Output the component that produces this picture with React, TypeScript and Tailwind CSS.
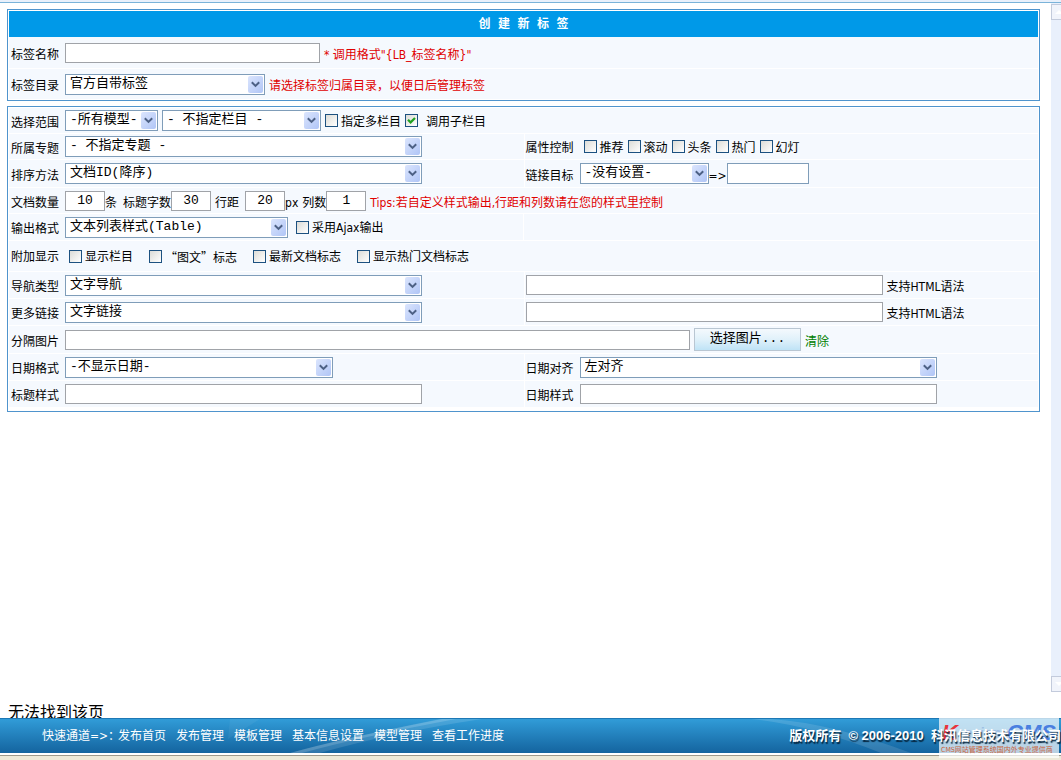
import React from 'react';
import clsx from 'clsx';

interface SelectProps {
  id: string;
  options: string[];
  className: string;
  label?: string;
}

interface TextInputProps {
  id: string;
  className: string;
  value?: string;
  label?: string;
}

interface CheckProps {
  id: string;
  text: string;
  checked?: boolean;
  className?: string;
}

interface CellProps {
  className?: string;
  children?: React.ReactNode;
}

const CONTROL_FONT = "font-['Liberation_Mono','Noto_Sans_CJK_SC',monospace] text-[13px]";

const Select: React.FC<SelectProps> = ({ id, options, className, label }) => (
  <div className={clsx('relative h-[21px] shrink-0', className)}>
    <select
      id={id}
      aria-label={label}
      className={clsx(
        'block h-full w-full appearance-none border border-[#7f9db9] bg-white pb-px pl-1 pr-5 leading-4 text-black',
        CONTROL_FONT
      )}
    >
      {options.map((option) => (
        <option key={option}>{option}</option>
      ))}
    </select>
    <span className="pointer-events-none absolute right-[2px] top-[2px] flex h-[17px] w-[15px] items-center justify-center rounded-xs bg-gradient-to-br from-[#dbe5fd] to-[#b0c5f6]">
      <svg width="9" height="7" viewBox="0 0 9 7" fill="none" stroke="#4d6185" strokeWidth="2">
        <path d="M0.8 1.2 L4.5 4.9 L8.2 1.2" />
      </svg>
    </span>
  </div>
);

const TextInput: React.FC<TextInputProps> = ({ id, className, value = '', label }) => (
  <input
    id={id}
    type="text"
    aria-label={label}
    defaultValue={value}
    className={clsx('h-5 shrink-0 border border-[#a0a3a8] bg-white pb-px text-black', CONTROL_FONT, className)}
  />
);

const Check: React.FC<CheckProps> = ({ id, text, checked = false, className = 'gap-[3px]' }) => (
  <div className={clsx('flex shrink-0 items-center', className)}>
    <span className="relative h-[13px] w-[13px]">
      <input
        id={id}
        type="checkbox"
        defaultChecked={checked}
        className="peer block h-[13px] w-[13px] appearance-none border border-[#1c5180] bg-gradient-to-br from-[#dcdcd7] to-white"
      />
      <svg
        className="pointer-events-none absolute left-[2px] top-[2px] hidden peer-checked:block"
        width="9"
        height="9"
        viewBox="0 0 9 9"
        fill="none"
        stroke="#21a121"
        strokeWidth="2.2"
      >
        <path d="M1 3.8 L3.6 6.4 L8 2" />
      </svg>
    </span>
    <label htmlFor={id} className="pt-[2px]">
      {text}
    </label>
  </div>
);

const FieldLabel: React.FC<{ htmlFor: string; children: React.ReactNode }> = ({ htmlFor, children }) => (
  <label htmlFor={htmlFor} className="mr-[6px] shrink-0 pt-1">
    {children}
  </label>
);

const Row: React.FC<{ height: string; children: React.ReactNode }> = ({ height, children }) => (
  <div className={clsx('flex gap-px', height)}>{children}</div>
);

const Cell: React.FC<CellProps> = ({ className = 'pl-[2px]', children }) => (
  <div className={clsx('flex min-w-0 flex-1 basis-0 items-center bg-[#f5f9fe]', className)}>{children}</div>
);

const Panel: React.FC<CellProps> = ({ className, children }) => (
  <section className={clsx('flex flex-col gap-px border border-[#4f94cd] bg-white px-px pt-px', className)}>
    {children}
  </section>
);

const flags = ['推荐', '滚动', '头条', '热门', '幻灯'];
const links = ['发布首页', '发布管理', '模板管理', '基本信息设置', '模型管理', '查看工作进度'];

const ScrollBar = () => (
  <div className="flex w-[10px] shrink-0 flex-col justify-between overflow-hidden bg-[#e9f0fc]">
    <div className="mt-px flex h-4 w-4 items-center justify-center border border-[#c3cbdc] bg-[#f1f4fb]">
      <svg width="8" height="4" viewBox="0 0 8 4" fill="#ffffff">
        <path d="M4 0 L8 4 H0 Z" />
      </svg>
    </div>
    <div className="flex h-4 w-4 items-center justify-center border border-[#c3cbdc] bg-[#f1f4fb]">
      <svg width="8" height="4" viewBox="0 0 8 4" fill="#ffffff">
        <path d="M0 0 H8 L4 4 Z" />
      </svg>
    </div>
  </div>
);

const LabelForm = () => (
  <form className="flex min-w-0 flex-1 flex-col gap-[5px] pl-[7px] pr-[11px] pt-[6px]">
    <Panel className="pb-px">
      <div>
        <h1 className="h-[26px] whitespace-pre bg-[#0099e8] text-center text-xs font-bold leading-[26px] text-white">
          创  建  新  标  签
        </h1>
        <Row height="h-[31px]">
          <Cell>
            <FieldLabel htmlFor="name">标签名称</FieldLabel>
            <TextInput id="name" className="w-[255px]" />
            <span className="ml-1 pt-1 text-[#e00000]">* 调用格式"{'{LB_标签名称}'}"</span>
          </Cell>
        </Row>
      </div>
      <Row height="h-[30px]">
        <Cell>
          <FieldLabel htmlFor="folder">标签目录</FieldLabel>
          <Select id="folder" className="w-[200px]" options={['官方自带标签']} />
          <span className="ml-1 pt-1 text-[#e00000]">请选择标签归属目录，以便日后管理标签</span>
        </Cell>
      </Row>
    </Panel>

    <Panel className="pb-1">
      <Row height="h-[25px]">
        <Cell>
          <FieldLabel htmlFor="model">选择范围</FieldLabel>
          <Select id="model" className="mr-1 w-[93px]" options={['-所有模型-']} />
          <Select id="column" label="栏目" className="mr-1 w-[159px]" options={['- 不指定栏目 -']} />
          <div className="flex gap-1">
            <Check id="multi" text="指定多栏目" />
            <Check id="children" text="调用子栏目" checked className="gap-2" />
          </div>
        </Cell>
      </Row>
      <Row height="h-[25px]">
        <Cell>
          <FieldLabel htmlFor="topic">所属专题</FieldLabel>
          <Select id="topic" className="w-[357px]" options={['- 不指定专题 -']} />
        </Cell>
        <Cell className="pl-px">
          <span className="mr-[10px] shrink-0 pt-[2px]">属性控制</span>
          <div className="flex gap-1">
            {flags.map((flag) => (
              <Check key={flag} id={flag} text={flag} />
            ))}
          </div>
        </Cell>
      </Row>
      <Row height="h-[27px]">
        <Cell>
          <FieldLabel htmlFor="order">排序方法</FieldLabel>
          <Select id="order" className="w-[357px]" options={['文档ID(降序)']} />
        </Cell>
        <Cell className="pl-px">
          <FieldLabel htmlFor="target">链接目标</FieldLabel>
          <Select id="target" className="w-[129px]" options={['-没有设置-']} />
          <span className="w-[18px] shrink-0 pt-1 text-center">=&gt;</span>
          <input
            type="text"
            aria-label="自定义链接目标"
            className="h-[21px] w-[82px] shrink-0 border border-[#7f9db9] bg-white"
          />
        </Cell>
      </Row>
      <Row height="h-[25px]">
        <Cell>
          <FieldLabel htmlFor="count">文档数量</FieldLabel>
          <TextInput id="count" value="10" className="w-10 text-center" />
          <span className="mr-[6px] pt-1">条</span>
          <label htmlFor="length" className="pt-1">标题字数</label>
          <TextInput id="length" value="30" className="mr-1 w-10 text-center" />
          <FieldLabel htmlFor="spacing">行距</FieldLabel>
          <TextInput id="spacing" value="20" className="w-10 text-center" />
          <span className="mr-1 pt-1">px</span>
          <label htmlFor="cols" className="pt-1">列数</label>
          <TextInput id="cols" value="1" className="mr-1 w-10 text-center" />
          <span className="pt-1 text-[#e00000]">Tips:若自定义样式输出,行距和列数请在您的样式里控制</span>
        </Cell>
      </Row>
      <Row height="h-[26px]">
        <Cell>
          <FieldLabel htmlFor="format">输出格式</FieldLabel>
          <Select id="format" className="mr-2 w-[223px]" options={['文本列表样式(Table)']} />
          <Check id="ajax" text="采用Ajax输出" />
        </Cell>
        <Cell />
      </Row>
      <Row height="h-[30px]">
        <Cell>
          <span className="mr-[10px] pt-[2px]">附加显示</span>
          <div className="flex gap-4">
            <Check id="show-column" text="显示栏目" />
            <Check
              id="show-image"
              text="“图文”标志"
              className="gap-[3px] font-['Noto_Sans_CJK_SC',sans-serif]"
            />
            <Check id="show-new" text="最新文档标志" />
            <Check id="show-hot" text="显示热门文档标志" />
          </div>
        </Cell>
      </Row>
      <Row height="h-[26px]">
        <Cell>
          <FieldLabel htmlFor="nav">导航类型</FieldLabel>
          <Select id="nav" className="w-[357px]" options={['文字导航']} />
        </Cell>
        <Cell className="pl-px">
          <TextInput id="nav-text" label="导航文字" className="w-[357px]" />
          <span className="ml-1 pt-1">支持HTML语法</span>
        </Cell>
      </Row>
      <Row height="h-[26px]">
        <Cell>
          <FieldLabel htmlFor="more">更多链接</FieldLabel>
          <Select id="more" className="w-[357px]" options={['文字链接']} />
        </Cell>
        <Cell className="pl-px">
          <TextInput id="more-text" label="链接文字" className="w-[357px]" />
          <span className="ml-1 pt-1">支持HTML语法</span>
        </Cell>
      </Row>
      <Row height="h-[27px]">
        <Cell>
          <FieldLabel htmlFor="divider">分隔图片</FieldLabel>
          <TextInput id="divider" className="mr-1 w-[625px]" />
          <button
            type="button"
            className={clsx(
              'h-[23px] w-[107px] shrink-0 border border-[#b9c6d2] bg-gradient-to-b from-[#f4f9fd] via-[#e0f1fa] to-[#bfe3f6] pb-[2px] text-black',
              CONTROL_FONT
            )}
          >
            选择图片...
          </button>
          <a href="#clear" className="ml-1 pt-1 text-[#008000]">清除</a>
        </Cell>
      </Row>
      <Row height="h-[26px]">
        <Cell>
          <FieldLabel htmlFor="date-format">日期格式</FieldLabel>
          <Select id="date-format" className="w-[268px]" options={['-不显示日期-']} />
        </Cell>
        <Cell className="pl-px">
          <FieldLabel htmlFor="date-align">日期对齐</FieldLabel>
          <Select id="date-align" className="w-[357px]" options={['左对齐']} />
        </Cell>
      </Row>
      <Row height="h-[26px]">
        <Cell>
          <FieldLabel htmlFor="title-style">标题样式</FieldLabel>
          <TextInput id="title-style" className="w-[357px]" />
        </Cell>
        <Cell className="pl-px">
          <FieldLabel htmlFor="date-style">日期样式</FieldLabel>
          <TextInput id="date-style" className="w-[357px]" />
        </Cell>
      </Row>
    </Panel>
  </form>
);

const Footer = () => (
  <footer className="relative shrink-0">
    <div className="relative flex h-[35px] items-center justify-between border-t border-[#1d78b5] bg-gradient-to-b from-[#319cd8] to-[#14649f] pl-[42px] text-white">
      <svg className="absolute left-[220px] top-0" width="320" height="34" viewBox="0 0 320 34" fill="#ffffff">
        <path d="M70 34 Q120 20 220 0 H262 Q170 14 100 34 Z" opacity="0.12" />
        <path d="M70 34 Q120 20 222 0 H236 Q140 18 82 34 Z" opacity="0.16" />
        <path d="M10 0 L8 20 L40 0 Z" opacity="0.05" />
      </svg>
      <svg className="absolute right-[150px] top-0" width="160" height="34" viewBox="0 0 160 34" fill="#ffffff">
        <path d="M0 0 Q60 6 130 34 H160 Q80 4 20 0 Z" opacity="0.12" />
      </svg>
      <nav className="relative flex gap-[10px] whitespace-nowrap">
        <span className="w-[66px]">快速通道=&gt;：</span>
        {links.map((link) => (
          <a key={link} href="#nav">{link}</a>
        ))}
      </nav>
      <p className="relative z-10 whitespace-pre font-['Liberation_Sans','Noto_Sans_CJK_SC',sans-serif] text-[13px] font-bold [text-shadow:1px_2px_1px_#06263f]">
        版权所有  © 2006-2010  科汛信息技术有限公司
      </p>
    </div>
    <div className="h-[2px] bg-white" />
    <div className="h-[5px] border-t border-[#9c998c] bg-[#ece9d8]" />
    {/* Vendor badge, sits under the copyright line */}
    <div className="absolute right-[2px] top-0 flex h-10 w-[120px] flex-col justify-between bg-white/70 pb-1 pt-[5px] leading-none">
      <div className="flex items-end justify-between whitespace-nowrap px-[3px] font-['Liberation_Sans',sans-serif] text-[22px] font-bold italic leading-5">
        <span className="text-[#e8343c]">K</span>
        <span className="text-sm text-[#9dbfe4]">esion</span>
        <span className="text-[#4a7fe0]">CMS</span>
      </div>
      <div className="whitespace-nowrap pl-[2px] text-[7px] text-[#c9643c]">CMS网站管理系统国内外专业提供商</div>
    </div>
  </footer>
);

export default function App() {
  return (
    <div className="flex min-h-screen flex-col bg-white font-['DejaVu_Sans_Condensed','Noto_Sans_CJK_SC',sans-serif] text-xs leading-4 text-black">
      <div className="h-[3px] shrink-0 border-b border-[#7ab3d9] bg-[#e8f0fb]" />
      <main className="flex flex-1">
        <LabelForm />
        <ScrollBar />
      </main>
      <p className="h-[26px] shrink-0 overflow-hidden pl-2 pt-[7px] font-['Noto_Sans_CJK_SC',sans-serif] text-base">
        无法找到该页
      </p>
      <Footer />
    </div>
  );
}
